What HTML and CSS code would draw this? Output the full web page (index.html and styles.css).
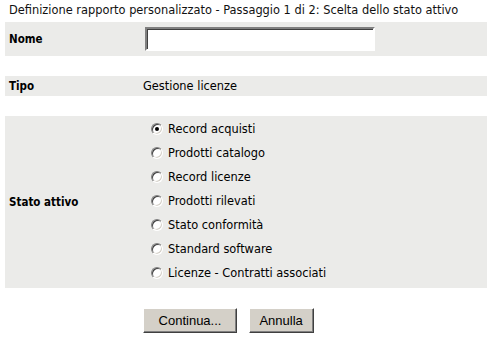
FILE: index.html
```html
<!DOCTYPE html>
<html lang="it">
<head>
    <meta charset="UTF-8">
    <title>Definizione rapporto personalizzato</title>
    <link rel="stylesheet" href="styles.css">
</head>
<body>
    <div class="page">
        <div class="title">Definizione rapporto personalizzato - Passaggio 1 di 2: Scelta dello stato attivo</div>
        <table class="form">
            <tr class="row row-name">
                <td class="label">Nome</td>
                <td class="value"><input type="text" class="text-input"></td>
            </tr>
            <tr class="spacer"><td colspan="2"></td></tr>
            <tr class="row row-type">
                <td class="label">Tipo</td>
                <td class="value">Gestione licenze</td>
            </tr>
            <tr class="spacer"><td colspan="2"></td></tr>
            <tr class="row row-state">
                <td class="label">Stato attivo</td>
                <td class="value">
                    <div class="radio-list">
                        <label class="radio"><input type="radio" name="stato" checked> Record acquisti</label>
                        <label class="radio"><input type="radio" name="stato"> Prodotti catalogo</label>
                        <label class="radio"><input type="radio" name="stato"> Record licenze</label>
                        <label class="radio"><input type="radio" name="stato"> Prodotti rilevati</label>
                        <label class="radio"><input type="radio" name="stato"> Stato conformità</label>
                        <label class="radio"><input type="radio" name="stato"> Standard software</label>
                        <label class="radio"><input type="radio" name="stato"> Licenze - Contratti associati</label>
                    </div>
                </td>
            </tr>
            <tr class="buttons-row">
                <td></td>
                <td class="buttons">
                    <button class="btn btn-next">Continua...</button>
                    <button class="btn btn-cancel">Annulla</button>
                </td>
            </tr>
        </table>
    </div>
</body>
</html>
```

FILE: styles.css
```css
body {
    margin: 0;
    font-family: "DejaVu Sans", sans-serif;
    font-size: 11.4px;
    color: #000;
    background: #fff;
}

.page {
    padding: 0 1px 0 5px;
}

.title {
    height: 22px;
    line-height: 21px;
    padding-left: 4px;
    color: #111;
}

.form {
    width: 482px;
    border-collapse: collapse;
}

.form td {
    padding: 0;
}

.row {
    background: #ebebe9;
}

.form .label {
    width: 134px;
    padding-left: 4px;
    font-family: "DejaVu Sans Condensed", "DejaVu Sans", sans-serif;
    font-size: 11.5px;
    font-weight: bold;
    vertical-align: middle;
}

.row-name {
    height: 34px;
}

.row-type {
    height: 20px;
}

.spacer td {
    height: 20px;
}

.text-input {
    box-sizing: border-box;
    width: 230px;
    height: 24px;
    margin: 0 0 0 2px;
    display: block;
    border: 2px solid;
    border-color: #808080 #ffffff #ffffff #808080;
    box-shadow: inset 1px 1px 0 #404040;
    background: #fff;
    outline: none;
}

.radio-list {
    padding: 1px 0 3px 8px;
}

.radio {
    display: flex;
    align-items: center;
    height: 24px;
}

.radio input {
    appearance: none;
    -webkit-appearance: none;
    box-sizing: border-box;
    width: 12px;
    height: 12px;
    margin: 0 5px 0 0;
    border-radius: 50%;
    border: 1px solid;
    border-color: #808080 #ffffff #ffffff #808080;
    box-shadow: inset 1px 1px 0 #404040, inset -1px -1px 0 #d4d0c8;
    background: #fff;
    position: relative;
}

.radio input:checked::after {
    content: "";
    position: absolute;
    left: 3px;
    top: 3px;
    width: 4px;
    height: 4px;
    border-radius: 50%;
    background: #000;
}

.form .buttons {
    padding-top: 20px;
}

.btn {
    font-family: "Liberation Sans", Arial, sans-serif;
    font-size: 13px;
    height: 25px;
    background: #d4d0c8;
    color: #000;
    border: 1px solid;
    border-color: #ffffff #404040 #404040 #ffffff;
    box-shadow: inset -1px -1px 0 #808080;
    padding: 0;
    margin: 0;
}

.btn-next {
    width: 94px;
}

.btn-cancel {
    width: 65px;
    margin-left: 8px;
}
```
